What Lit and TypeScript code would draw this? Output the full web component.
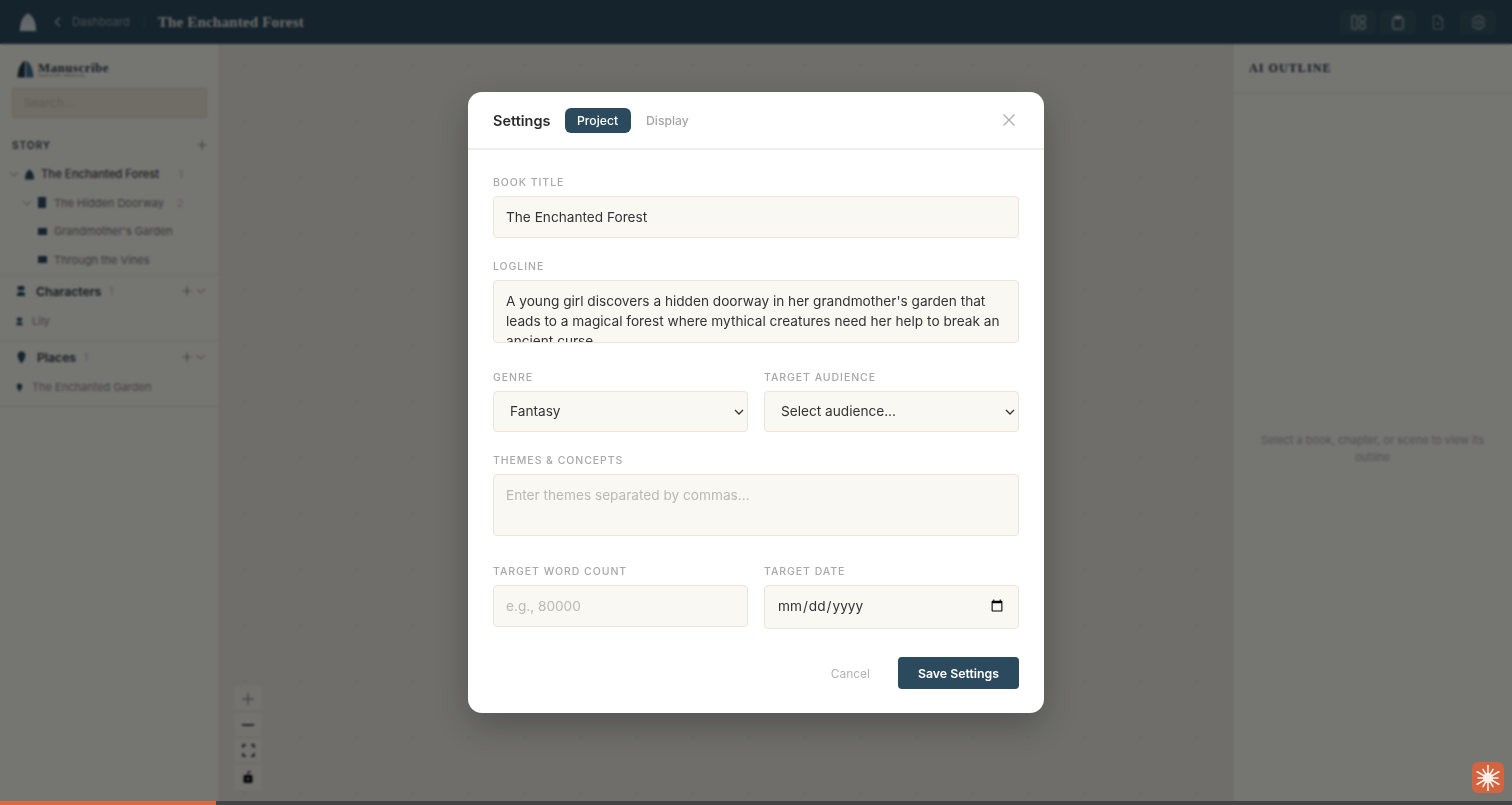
import { LitElement, html, css, svg } from 'lit';
import { customElement } from 'lit/decorators.js';

// small shapes shared by the sidebar and the top bar
const DOME = 'M2 19 C2 12 3.500 5 10 1 C16.500 5 18 12 18 19 Z';

const dome = (fill: string, size = 20) => html`
  <svg width=${size} height=${size} viewBox="0 0 20 20">
    <path d=${DOME} fill=${fill}></path>
  </svg>`;

const brandMark = html`
  <svg width="19" height="20" viewBox="0 0 20 20">
    <path d="M1.500 19 C2 12 3.500 5 9.500 1 V19 Z" fill="#1f3645"></path>
    <path d="M10.500 1 C16.500 5 18 12 18.500 19 H10.500 Z" fill="#3d6a88"></path>
  </svg>`;

const topMark = html`
  <svg width="20" height="20" viewBox="0 0 20 20">
    <defs>
      <linearGradient id="mark" x1="0" y1="0" x2="0" y2="1">
        <stop offset="0" stop-color="#b4c0c6"></stop>
        <stop offset="1" stop-color="#d5dadb"></stop>
      </linearGradient>
    </defs>
    <path d=${DOME} fill="url(#mark)"></path>
    <path d="M1 19 H19" stroke="#6f8da0" stroke-width="1"></path>
  </svg>`;

const person = (size: number) => html`
  <svg width=${size} height=${size} viewBox="0 0 12 12" fill="#2c4a5e">
    <path d="M3 1 h6 l.6 3 -1.600 1.500 h-4 L2.400 4 Z"></path>
    <path d="M2 11 V8.500 L4 7 h4 l2 1.500 V11 Z"></path>
  </svg>`;

const pin = (size: number) => html`
  <svg width=${size} height=${size} viewBox="0 0 12 12">
    <path d="M6 0.500 C9 0.500 10 3 9.500 5 C9 7.500 7 10 6 11.500 C5 10 3 7.500 2.500 5 C2 3 3 0.500 6 0.500 Z" fill="#2c4a5e"></path>
  </svg>`;

const chevronDown = html`
  <svg width="10" height="10" viewBox="0 0 10 10" fill="none" stroke="#8a8a86" stroke-width="1">
    <path d="M1 3 L5 7 L9 3"></path>
  </svg>`;

const plus = html`
  <svg width="10" height="10" viewBox="0 0 10 10" stroke="#8a8a86" stroke-width="1.200">
    <path d="M5 0.500 V9.500 M0.500 5 H9.500"></path>
  </svg>`;

@customElement('settings-modal')
export class SettingsModal extends LitElement {
  static styles = css`
    :host {
      position: fixed;
      inset: 0;
      z-index: 50;
      display: flex;
      align-items: flex-start;
      justify-content: center;
      background: rgba(0, 0, 0, 0.5);
      backdrop-filter: blur(1px);
      font-family: Inter, sans-serif;
    }

    .modal {
      width: 576px;
      height: 621px;
      margin-top: 92px;
      background: #fff;
      border-radius: 14px;
      box-shadow: 0 12px 36px rgba(0, 0, 0, 0.25);
      box-sizing: border-box;
    }

    .head {
      display: flex;
      align-items: center;
      height: 56px;
      padding: 0 25px;
      border-bottom: 2px solid #f1efe9;
    }

    .title {
      font-size: 14.500px;
      font-weight: 600;
      color: #2b2b2b;
      margin-right: 14px;
    }

    .tab {
      height: 25px;
      line-height: 25px;
      padding: 0 12.500px;
      font-size: 12.200px;
      font-weight: 500;
      color: #a5a5a5;
      border-radius: 6px;
      margin-right: 3px;
    }

    .tab.active {
      background: #2c4a5e;
      color: #fff;
    }

    .close {
      margin-left: auto;
      margin-right: 3px;
      display: flex;
    }

    .body {
      padding: 25px 25px 0;
    }

    .field {
      margin-bottom: 21px;
    }

    .field.after-area {
      margin-bottom: 27px;
    }

    .field.after-themes {
      margin-bottom: 28px;
    }

    .row {
      display: grid;
      grid-template-columns: 1fr 1fr;
      gap: 16px;
    }

    label {
      display: block;
      height: 14px;
      line-height: 16px;
      margin-bottom: 7px;
      font-size: 10.500px;
      font-weight: 500;
      letter-spacing: 0.09em;
      color: #a8a8a8;
      text-transform: uppercase;
    }

    input,
    textarea,
    select {
      display: block;
      width: 100%;
      box-sizing: border-box;
      background-color: #faf8f3;
      border: 1px solid #ece5da;
      border-radius: 4px;
      padding: 0 12px;
      font-family: Inter, sans-serif;
      font-size: 13.650px;
      color: #333;
      outline: none;
    }

    input {
      height: 42px;
    }

    input[type='date'] {
      height: 44px;
      padding-bottom: 2px;
    }

    select {
      height: 41px;
      padding: 0 0 1px 16px;
      appearance: none;
      background-image: url("data:image/svg+xml,%3Csvg xmlns='http://www.w3.org/2000/svg' width='10' height='6'%3E%3Cpath d='M1 1l4 4 4-4' fill='none' stroke='%23333' stroke-width='1.300'/%3E%3C/svg%3E");
      background-repeat: no-repeat;
      background-position: right 3px center;
    }

    textarea {
      height: 63px;
      padding-top: 10px;
      line-height: 20px;
      overflow: hidden;
      resize: none;
    }

    textarea.themes {
      height: 62px;
    }

    ::placeholder {
      color: #b9b9b5;
      opacity: 1;
    }

    .actions {
      display: flex;
      justify-content: flex-end;
      align-items: center;
      gap: 28px;
    }

    .cancel {
      font-size: 12px;
      color: #b3b3b3;
    }

    .save {
      width: 121px;
      height: 32px;
      border: none;
      border-radius: 4px;
      background: #2c4a5e;
      color: #fff;
      font-family: Inter, sans-serif;
      font-size: 12.300px;
      font-weight: 600;
    }
  `;

  render() {
    return html`
      <div class="modal">
        <div class="head">
          <span class="title">Settings</span>
          <span class="tab active">Project</span>
          <span class="tab">Display</span>
          <span class="close">
            <svg width="14" height="14" viewBox="0 0 14 14" stroke="#b0b0b0" stroke-width="1.400">
              <path d="M1.500 1.500 L12.500 12.500 M12.500 1.500 L1.500 12.500"></path>
            </svg>
          </span>
        </div>
        <div class="body">
          <div class="field">
            <label>Book Title</label>
            <input type="text" .value=${'The Enchanted Forest'} />
          </div>
          <div class="field after-area">
            <label>Logline</label>
            <textarea .value=${"A young girl discovers a hidden doorway in her grandmother's garden that leads to a magical forest where mythical creatures need her help to break an ancient curse."}></textarea>
          </div>
          <div class="row field">
            <div>
              <label>Genre</label>
              <select><option>Fantasy</option></select>
            </div>
            <div>
              <label>Target Audience</label>
              <select><option>Select audience...</option></select>
            </div>
          </div>
          <div class="field after-themes">
            <label>Themes &amp; Concepts</label>
            <textarea class="themes" placeholder="Enter themes separated by commas..."></textarea>
          </div>
          <div class="row field after-themes">
            <div>
              <label>Target Word Count</label>
              <input type="text" placeholder="e.g., 80000" />
            </div>
            <div>
              <label>Target Date</label>
              <input type="date" />
            </div>
          </div>
          <div class="actions">
            <span class="cancel">Cancel</span>
            <button class="save">Save Settings</button>
          </div>
        </div>
      </div>
    `;
  }
}

@customElement('app-root')
export class AppRoot extends LitElement {
  static styles = css`
    :host {
      display: flex;
      flex-direction: column;
      height: 805px;
      overflow: hidden;
      font-family: Inter, sans-serif;
      background: #dedDd6;
    }

    .topbar {
      flex: none;
      display: flex;
      align-items: center;
      height: 44px;
      padding: 0 16px 0 18px;
      box-sizing: border-box;
      background: #2a4658;
    }

    .back {
      display: flex;
      margin-left: 15px;
      margin-right: 9px;
    }

    .crumb {
      font-size: 11.200px;
      color: #8496a2;
    }

    .sep {
      width: 1px;
      height: 14px;
      margin: 0 13px 0 14px;
      background: #47606f;
    }

    .book {
      font-family: 'Liberation Serif', serif;
      font-size: 15px;
      font-weight: 700;
      letter-spacing: 0.2px;
      color: #d8d6d0;
    }

    .tools {
      margin-left: auto;
      display: flex;
      gap: 4px;
    }

    .tool {
      display: flex;
      align-items: center;
      justify-content: center;
      width: 36px;
      height: 24px;
      border-radius: 5px;
      background: #33505f;
    }

    .tool.plain {
      background: none;
    }

    .main {
      flex: 1;
      display: flex;
      min-height: 0;
    }

    .sidebar {
      flex: none;
      width: 220px;
      box-sizing: border-box;
      background: #ebeae4;
      border-right: 1px solid #d4d1c7;
    }

    .brand {
      display: flex;
      align-items: center;
      gap: 3px;
      padding: 15px 0 10px 16px;
      height: 19px;
    }

    .brand-name {
      font-family: 'Liberation Serif', serif;
      font-size: 12.800px;
      font-weight: 700;
      line-height: 11px;
      letter-spacing: 0.55px;
      margin-top: 3px;
      color: #2c3e4c;
    }

    .brand-sub {
      font-size: 3px;
      line-height: 4px;
      letter-spacing: 0.4px;
      color: #4b5b66;
    }

    .search {
      margin: 0 12px;
      height: 30px;
      line-height: 28px;
      padding-left: 11px;
      box-sizing: border-box;
      background: #dedacc;
      border: 1px solid #cfc9b8;
      border-radius: 2px;
      font-size: 12px;
      color: #bdb8a8;
    }

    .story-head {
      display: flex;
      align-items: center;
      justify-content: space-between;
      padding: 20px 12px 0;
      height: 13px;
      margin-bottom: 9px;
      font-size: 10px;
      font-weight: 600;
      letter-spacing: 0.1em;
      color: #374855;
    }

    .tree-row {
      display: flex;
      align-items: center;
      height: 28.500px;
      padding-right: 36px;
      font-size: 11px;
      color: #777;
    }

    .tree-row.book-row {
      padding-left: 9px;
      color: #444;
      font-size: 11.300px;
      font-weight: 500;
    }

    .tree-row.chapter-row {
      padding-left: 22px;
    }

    .tree-row.scene-row {
      padding-left: 36px;
    }

    .arrow {
      flex: none;
      display: flex;
      width: 14px;
    }

    .ico {
      flex: none;
      display: flex;
      justify-content: center;
      width: 12px;
      margin-right: 6px;
    }

    .tree-row .count {
      margin-left: auto;
      color: #bbb;
      font-size: 10px;
    }

    .shape {
      display: block;
      background: #2c4a5e;
    }

    .shape.tall {
      width: 8px;
      height: 11px;
    }

    .shape.wide {
      width: 9px;
      height: 7px;
    }

    .group {
      border-top: 1px solid #d4d1c7;
    }

    .group:last-child {
      border-bottom: 1px solid #d4d1c7;
    }

    .group-head {
      display: flex;
      align-items: center;
      height: 32px;
      padding: 0 13px 0 15px;
      font-size: 12.200px;
      font-weight: 600;
      color: #2f3d47;
    }

    .group-head .name {
      margin-left: 9px;
    }

    .group-head .count {
      margin-left: 8px;
      font-size: 10px;
      font-weight: 400;
      color: #b5b5b5;
    }

    .acts {
      margin-left: auto;
      display: flex;
      gap: 4px;
      align-items: center;
    }

    .group-item {
      display: flex;
      align-items: center;
      gap: 8px;
      height: 28px;
      padding: 0 0 5px 15px;
      font-size: 11px;
      color: #8b8b8b;
    }

    .canvas {
      position: relative;
      flex: 1;
      background-color: #dedDd6;
      background-image: radial-gradient(circle, #c8c7c0 1px, transparent 1.500px);
      background-size: 56px 56px;
      background-position: -3px -7px;
    }

    .zoom-box {
      position: absolute;
      left: 15px;
      bottom: 15px;
      display: flex;
      flex-direction: column;
      width: 26px;
      background: #e6e5df;
    }

    .zoom-box span {
      display: flex;
      align-items: center;
      justify-content: center;
      height: 26px;
      box-sizing: border-box;
      border-bottom: 1px solid #d0cfc8;
    }

    .zoom-box span:last-child {
      border-bottom: none;
    }

    .outline {
      flex: none;
      display: flex;
      flex-direction: column;
      width: 280px;
      box-sizing: border-box;
      background: #ebeae4;
      border-left: 1px solid #d4d1c7;
    }

    .outline-head {
      height: 49px;
      line-height: 48px;
      padding-left: 16px;
      box-sizing: border-box;
      border-bottom: 1px solid #d4d1c7;
      font-family: 'Liberation Serif', serif;
      font-size: 12px;
      font-weight: 700;
      letter-spacing: 0.09em;
      color: #2c3e4c;
    }

    .outline-empty {
      flex: 1;
      display: flex;
      align-items: center;
      justify-content: center;
      padding: 0 20px;
      text-align: center;
      font-size: 11px;
      line-height: 17px;
      color: #a8a8a4;
    }

    .progress {
      position: fixed;
      left: 0;
      right: 0;
      bottom: 0;
      z-index: 60;
      height: 4px;
      background: #444;
    }

    .progress div {
      height: 100%;
      background: #d9683f;
    }

    .badge {
      position: fixed;
      right: 8px;
      bottom: 12px;
      z-index: 60;
      display: flex;
      align-items: center;
      justify-content: center;
      width: 32px;
      height: 31px;
      border-radius: 6px;
      background: #d2643f;
    }
  `;

  // the burst on the corner badge
  private burst() {
    const rays = [0, 30, 60, 90, 120, 150, 180, 210, 240, 270, 300, 330];
    return html`
      <svg width="26" height="26" viewBox="0 0 26 26" stroke="#f7f1ea" stroke-width="1.600" stroke-linecap="round">
        ${rays.map((deg, i) => {
          const len = i % 2 ? 12.5 : 10;
          const a = (deg * Math.PI) / 180;
          return svg`<line x1="13" y1="13" x2=${13 + Math.cos(a) * len} y2=${13 + Math.sin(a) * len}></line>`;
        })}
        <circle cx="13" cy="13" r="5" fill="#f7f1ea" stroke="none"></circle>
      </svg>`;
  }

  render() {
    return html`
      <div class="topbar">
        ${topMark}
        <span class="back">
          <svg width="10" height="12" viewBox="0 0 10 12" fill="none" stroke="#a9b6be" stroke-width="1.300">
            <path d="M7 1.500 L2.500 6 L7 10.500"></path>
          </svg>
        </span>
        <span class="crumb">Dashboard</span>
        <span class="sep"></span>
        <span class="book">The Enchanted Forest</span>
        <div class="tools">
          <span class="tool">
            <svg width="15" height="15" viewBox="0 0 15 15" fill="none" stroke="#c0c8cd" stroke-width="1">
              <rect x="1" y="1" width="5" height="13" rx="0.500"></rect>
              <rect x="9" y="1" width="5" height="5.500" rx="0.500"></rect>
              <rect x="9" y="8.500" width="5" height="5.500" rx="0.500"></rect>
            </svg>
          </span>
          <span class="tool">
            <svg width="14" height="15" viewBox="0 0 14 15" fill="none" stroke="#c0c8cd" stroke-width="1">
              <rect x="2" y="2.500" width="10" height="11.500" rx="1"></rect>
              <rect x="4.500" y="1" width="5" height="2.500" rx="0.500"></rect>
            </svg>
          </span>
          <span class="tool plain">
            <svg width="12" height="15" viewBox="0 0 12 15" fill="none" stroke="#8d9ca5" stroke-width="1">
              <path d="M1.500 1 H7.500 L10.500 4 V14 H1.500 Z M7.500 1 V4 H10.500"></path>
              <path d="M4.500 8.500 H7.500 M6 7 V10"></path>
            </svg>
          </span>
          <span class="tool">
            <svg width="15" height="15" viewBox="0 0 15 15" fill="none" stroke="#b4bec4" stroke-width="1">
              <path d="M5.800 1 H9.200 L9.800 2.800 L11.600 2.400 L13.400 5.300 L12.100 6.700 V8.300 L13.400 9.700 L11.600 12.600 L9.800 12.200 L9.200 14 H5.800 L5.200 12.200 L3.400 12.600 L1.600 9.700 L2.900 8.300 V6.700 L1.600 5.300 L3.400 2.400 L5.200 2.800 Z"></path>
              <circle cx="7.500" cy="7.500" r="2.300"></circle>
            </svg>
          </span>
        </div>
      </div>

      <div class="main">
        <aside class="sidebar">
          <div class="brand">
            ${brandMark}
            <div>
              <div class="brand-name">Manuscribe</div>
              <div class="brand-sub">YOUR STORY, PERFECTED.</div>
            </div>
          </div>
          <div class="search">Search...</div>

          <div class="story-head"><span>STORY</span>${plus}</div>
          <div class="tree-row book-row">
            <span class="arrow">${chevronDown}</span>
            <span class="ico">${dome('#2c4a5e', 11)}</span>
            The Enchanted Forest<span class="count">1</span>
          </div>
          <div class="tree-row chapter-row">
            <span class="arrow">${chevronDown}</span>
            <span class="ico"><span class="shape tall"></span></span>
            The Hidden Doorway<span class="count">2</span>
          </div>
          <div class="tree-row scene-row">
            <span class="ico"><span class="shape wide"></span></span>
            Grandmother's Garden
          </div>
          <div class="tree-row scene-row">
            <span class="ico"><span class="shape wide"></span></span>
            Through the Vines
          </div>

          <div class="group">
            <div class="group-head">
              ${person(12)}<span class="name">Characters</span><span class="count">1</span>
              <span class="acts">${plus}${chevronDown}</span>
            </div>
            <div class="group-item">${person(9)}Lily</div>
          </div>
          <div class="group">
            <div class="group-head">
              ${pin(13)}<span class="name">Places</span><span class="count">1</span>
              <span class="acts">${plus}${chevronDown}</span>
            </div>
            <div class="group-item">${pin(9)}The Enchanted Garden</div>
          </div>
        </aside>

        <div class="canvas">
          <div class="zoom-box">
            <span>
              <svg width="14" height="14" viewBox="0 0 14 14" stroke="#8c8c88" stroke-width="1.400"><path d="M7 1 V13 M1 7 H13"></path></svg>
            </span>
            <span>
              <svg width="14" height="14" viewBox="0 0 14 14" stroke="#222" stroke-width="1.600"><path d="M1 7 H13"></path></svg>
            </span>
            <span>
              <svg width="13" height="13" viewBox="0 0 13 13" fill="none" stroke="#222" stroke-width="1.400">
                <path d="M1 4 V1 H4 M9 1 H12 V4 M12 9 V12 H9 M4 12 H1 V9"></path>
              </svg>
            </span>
            <span>
              <svg width="12" height="14" viewBox="0 0 12 14">
                <path d="M6 5 V3 C6 1.500 8 1 8.500 2.500" fill="none" stroke="#111" stroke-width="1.100"></path>
                <rect x="1.500" y="5" width="9" height="8" rx="1" fill="#111"></rect>
                <circle cx="6" cy="9" r="1.100" fill="#eee"></circle>
              </svg>
            </span>
          </div>
        </div>

        <aside class="outline">
          <div class="outline-head">AI OUTLINE</div>
          <div class="outline-empty">Select a book, chapter, or scene to view its outline</div>
        </aside>
      </div>

      <settings-modal></settings-modal>
      <div class="progress"><div style="width: ${(216 / 1512) * 100}%"></div></div>
      <div class="badge">${this.burst()}</div>
    `;
  }
}
